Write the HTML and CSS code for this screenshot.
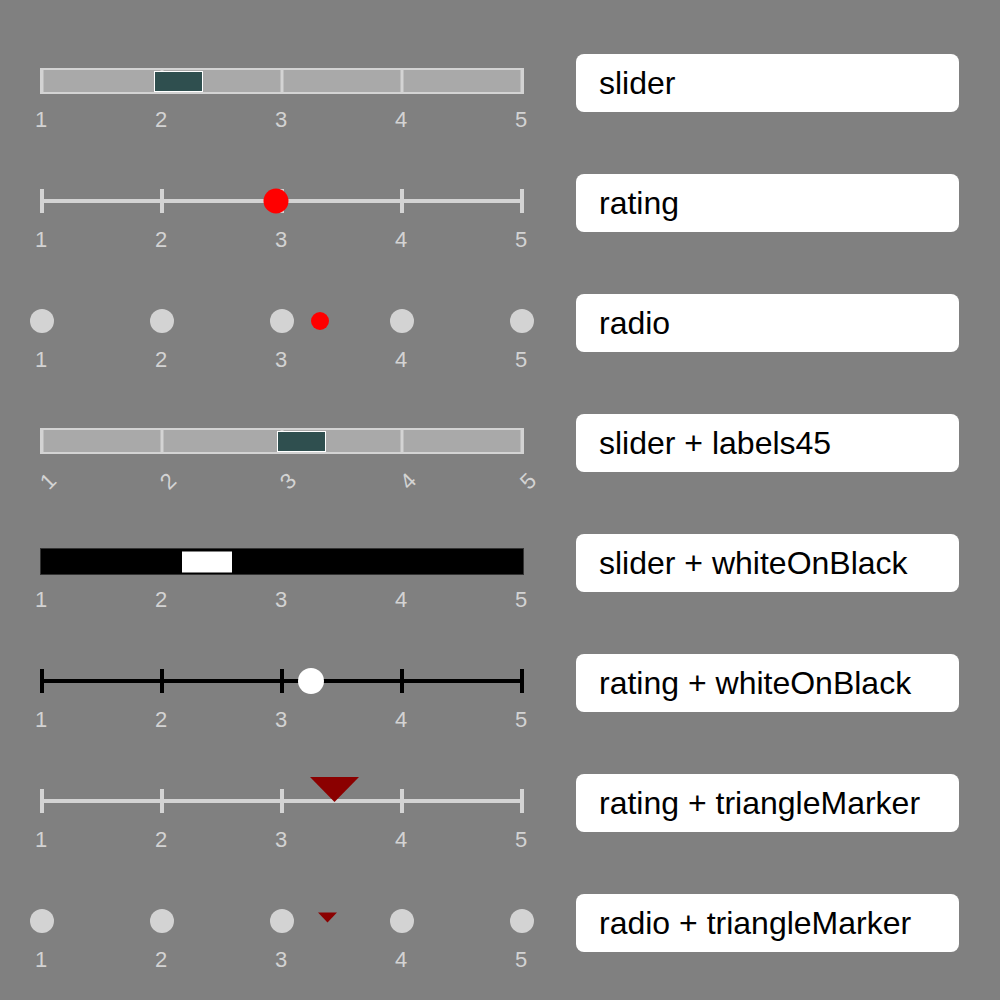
FILE: index.html
```html
<!DOCTYPE html>
<html lang="en">
<head>
<meta charset="UTF-8">
<title>Rating Scale Styles</title>
<link rel="stylesheet" href="styles.css">
</head>
<body>
<div class="page">

    <!-- slider -->
    <div class="row">
        <svg class="widget" viewBox="0 0 560 120">
            <rect class="bar" x="41" y="48" width="482" height="24"/>
            <g class="ticks-bar">
                <line x1="42" y1="47" x2="42" y2="73"/>
                <line x1="162" y1="47" x2="162" y2="73"/>
                <line x1="282" y1="47" x2="282" y2="73"/>
                <line x1="402" y1="47" x2="402" y2="73"/>
                <line x1="522" y1="47" x2="522" y2="73"/>
            </g>
            <rect class="thumb" x="154.5" y="50.5" width="48" height="20"/>
            <g class="labels">
                <text x="41" y="106">1</text><text x="161" y="106">2</text><text x="281" y="106">3</text><text x="401" y="106">4</text><text x="521" y="106">5</text>
            </g>
        </svg>
        <div class="name">slider</div>
    </div>

    <!-- rating -->
    <div class="row">
        <svg class="widget" viewBox="0 0 560 120">
            <g class="scale">
                <line x1="42" y1="60" x2="522" y2="60"/>
                <line x1="42" y1="48" x2="42" y2="72"/>
                <line x1="162" y1="48" x2="162" y2="72"/>
                <line x1="282" y1="48" x2="282" y2="72"/>
                <line x1="402" y1="48" x2="402" y2="72"/>
                <line x1="522" y1="48" x2="522" y2="72"/>
            </g>
            <circle class="marker-red" cx="276" cy="60" r="12.5"/>
            <g class="labels">
                <text x="41" y="106">1</text><text x="161" y="106">2</text><text x="281" y="106">3</text><text x="401" y="106">4</text><text x="521" y="106">5</text>
            </g>
        </svg>
        <div class="name">rating</div>
    </div>

    <!-- radio -->
    <div class="row">
        <svg class="widget" viewBox="0 0 560 120">
            <g class="dots">
                <circle cx="42" cy="60" r="12"/><circle cx="162" cy="60" r="12"/><circle cx="282" cy="60" r="12"/><circle cx="402" cy="60" r="12"/><circle cx="522" cy="60" r="12"/>
            </g>
            <circle class="marker-red" cx="320" cy="60" r="9"/>
            <g class="labels">
                <text x="41" y="106">1</text><text x="161" y="106">2</text><text x="281" y="106">3</text><text x="401" y="106">4</text><text x="521" y="106">5</text>
            </g>
        </svg>
        <div class="name">radio</div>
    </div>

    <!-- slider + labels45 -->
    <div class="row">
        <svg class="widget" viewBox="0 0 560 120">
            <rect class="bar" x="41" y="48" width="482" height="24"/>
            <g class="ticks-bar">
                <line x1="42" y1="47" x2="42" y2="73"/>
                <line x1="162" y1="47" x2="162" y2="73"/>
                <line x1="282" y1="47" x2="282" y2="73"/>
                <line x1="402" y1="47" x2="402" y2="73"/>
                <line x1="522" y1="47" x2="522" y2="73"/>
            </g>
            <rect class="thumb" x="277.5" y="50.5" width="48" height="20"/>
            <g class="labels tilted">
                <text x="48" y="100" transform="rotate(-45 48 100)">1</text>
                <text x="168" y="100" transform="rotate(-45 168 100)">2</text>
                <text x="288" y="100" transform="rotate(-45 288 100)">3</text>
                <text x="408" y="100" transform="rotate(-45 408 100)">4</text>
                <text x="528" y="100" transform="rotate(-45 528 100)">5</text>
            </g>
        </svg>
        <div class="name">slider + labels45</div>
    </div>

    <!-- slider + whiteOnBlack -->
    <div class="row">
        <svg class="widget" viewBox="0 0 560 120">
            <rect class="bar-dark" x="40.5" y="47.5" width="483" height="26"/>
            <rect class="thumb-light" x="182" y="50.5" width="50" height="21"/>
            <g class="labels">
                <text x="41" y="106">1</text><text x="161" y="106">2</text><text x="281" y="106">3</text><text x="401" y="106">4</text><text x="521" y="106">5</text>
            </g>
        </svg>
        <div class="name">slider + whiteOnBlack</div>
    </div>

    <!-- rating + whiteOnBlack -->
    <div class="row">
        <svg class="widget" viewBox="0 0 560 120">
            <g class="scale dark">
                <line x1="42" y1="60" x2="522" y2="60"/>
                <line x1="42" y1="48" x2="42" y2="72"/>
                <line x1="162" y1="48" x2="162" y2="72"/>
                <line x1="282" y1="48" x2="282" y2="72"/>
                <line x1="402" y1="48" x2="402" y2="72"/>
                <line x1="522" y1="48" x2="522" y2="72"/>
            </g>
            <circle class="marker-white" cx="311" cy="60" r="13"/>
            <g class="labels">
                <text x="41" y="106">1</text><text x="161" y="106">2</text><text x="281" y="106">3</text><text x="401" y="106">4</text><text x="521" y="106">5</text>
            </g>
        </svg>
        <div class="name">rating + whiteOnBlack</div>
    </div>

    <!-- rating + triangleMarker -->
    <div class="row">
        <svg class="widget" viewBox="0 0 560 120">
            <g class="scale">
                <line x1="42" y1="60" x2="522" y2="60"/>
                <line x1="42" y1="48" x2="42" y2="72"/>
                <line x1="162" y1="48" x2="162" y2="72"/>
                <line x1="282" y1="48" x2="282" y2="72"/>
                <line x1="402" y1="48" x2="402" y2="72"/>
                <line x1="522" y1="48" x2="522" y2="72"/>
            </g>
            <polygon class="marker-tri" points="310,36 359,36 334.5,61"/>
            <g class="labels">
                <text x="41" y="106">1</text><text x="161" y="106">2</text><text x="281" y="106">3</text><text x="401" y="106">4</text><text x="521" y="106">5</text>
            </g>
        </svg>
        <div class="name">rating + triangleMarker</div>
    </div>

    <!-- radio + triangleMarker -->
    <div class="row">
        <svg class="widget" viewBox="0 0 560 120">
            <g class="dots">
                <circle cx="42" cy="60" r="12"/><circle cx="162" cy="60" r="12"/><circle cx="282" cy="60" r="12"/><circle cx="402" cy="60" r="12"/><circle cx="522" cy="60" r="12"/>
            </g>
            <polygon class="marker-tri" points="318,51.5 337,51.5 327.5,61.5"/>
            <g class="labels">
                <text x="41" y="106">1</text><text x="161" y="106">2</text><text x="281" y="106">3</text><text x="401" y="106">4</text><text x="521" y="106">5</text>
            </g>
        </svg>
        <div class="name">radio + triangleMarker</div>
    </div>

</div>
</body>
</html>
```

FILE: styles.css
```css
body {
    margin: 0;
    background-color: #808080;
    font-family: 'Liberation Sans', Arial, sans-serif;
}
.page {
    padding-top: 21px;
}
.row {
    display: flex;
    align-items: flex-start;
    height: 120px;
}
.widget {
    display: block;
    width: 560px;
    height: 120px;
    flex-shrink: 0;
}
.name {
    box-sizing: border-box;
    width: 383px;
    height: 58px;
    margin-top: 33px;
    margin-left: 16px;
    padding-left: 23px;
    display: flex;
    align-items: center;
    background: #fff;
    border-radius: 8px;
    color: #000;
    font-size: 32px;
}

/* widget parts */
.bar {
    fill: #a9a9a9;
    stroke: #d3d3d3;
    stroke-width: 2;
}
.ticks-bar line {
    stroke: #d3d3d3;
    stroke-width: 3;
}
.thumb {
    fill: #2f4f4f;
    stroke: #fff;
    stroke-width: 1;
}
.bar-dark {
    fill: #000;
    stroke: #333;
    stroke-width: 1;
}
.thumb-light {
    fill: #fff;
}
.scale line {
    stroke: #d3d3d3;
    stroke-width: 4;
}
.scale.dark line {
    stroke: #000;
}
.dots circle {
    fill: #d3d3d3;
}
.marker-red {
    fill: #f00;
}
.marker-white {
    fill: #fff;
}
.marker-tri {
    fill: #8b0000;
}
.labels text {
    fill: #d3d3d3;
    font-family: 'Liberation Sans', Arial, sans-serif;
    font-size: 22px;
    text-anchor: middle;
}
.labels.tilted text {
    dominant-baseline: central;
}
```
